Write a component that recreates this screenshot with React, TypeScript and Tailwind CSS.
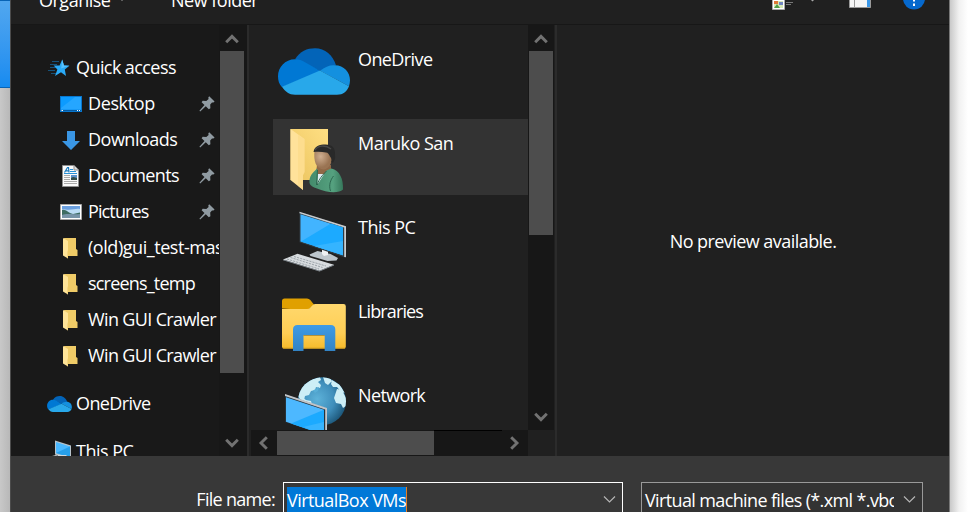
import type { ReactNode } from "react";

type Dir = "up" | "down" | "left" | "right";

const ARROWS: Record<Dir, string> = {
  up: "M7.2 17.2 13 11.4 18.8 17.2",
  down: "M7.2 9.8 13 15.6 18.8 9.8",
  left: "M15.8 7.2 10 13 15.8 18.8",
  right: "M9.2 7.2 15 13 9.2 18.8",
};

function ScrollArrow({ dir }: { dir: Dir }) {
  return (
    <svg className="h-[26px] w-[26px] shrink-0" viewBox="0 0 26 26" fill="none">
      <path d={ARROWS[dir]} stroke="#727272" strokeWidth="2.9" />
    </svg>
  );
}

function VScroll({ thumb }: { thumb: string }) {
  return (
    <div className="flex w-[26px] shrink-0 flex-col items-center justify-between bg-[#171717]">
      <div className="flex flex-col items-center">
        <ScrollArrow dir="up" />
        <div className={`w-6 bg-[#4d4d4d] ${thumb}`} />
      </div>
      <ScrollArrow dir="down" />
    </div>
  );
}

function Pin() {
  return (
    <svg className="h-4 w-4 shrink-0" viewBox="0 0 16 16" fill="#909ba2">
      <path d="M10.2.2 15.6 5.600 14.400 6.500 13 6.400 11.200 8.600 11.400 12.200 9.800 13.300 6.800 10.300 1.200 15.500.4 14.700 5.500 9 2.600 6.200 3.700 4.800 7.300 4.900 9.600 3 9.300 1.400Z" />
    </svg>
  );
}

function StarIcon() {
  return (
    <svg width="22" height="18" viewBox="0 0 22 18">
      <path d="M4 2.500h7M2 5.500h7M0 11.500h7M2 8.500h6M3 14.500h5" stroke="#17527a" strokeWidth="1" />
      <path d="m14.200.6 1.800 6 5.400.2-4.600 3.700 1.200 6.500-5-3.800-6 3.800 2.400-6.400L5.600 6.500l6 .1Z" fill="#2aaaf6" />
      <path d="m14.200.6 1.800 6 5.400.2-8.200 2.600Z" fill="#55c2ff" />
    </svg>
  );
}

function DesktopIcon() {
  return (
    <svg className="ml-px" width="22" height="16" viewBox="0 0 22 16">
      <path d="M0 0h22v16H0z" fill="#0877cf" />
      <path d="M1 1h20v12.600H1z" fill="#0c9bff" />
      <path d="M1 13.600V12L15 1h6v12.600Z" fill="#25a6ff" />
      <path d="M1 14h20v1H1z" fill="#06599e" />
      <path d="M1.500 14h1.500v1H1.500zM17 14h1v1h-1zM19 14h1v1h-1z" fill="#fff" />
    </svg>
  );
}

function DownloadIcon() {
  return (
    <svg className="ml-px" width="18" height="19" viewBox="0 0 18 19">
      <path d="M5 0h8v10h5l-9 9-9-9h5Z" fill="#3a96e4" />
    </svg>
  );
}

function DocumentIcon() {
  return (
    <svg width="17" height="22" viewBox="0 0 17 22">
      <path d="M.5.5H12L16.500 5v16.500H.5Z" fill="#fafafa" stroke="#8f8f8f" />
      <path d="M12 .5V5h4.500" fill="#ddd" stroke="#8f8f8f" />
      <path d="m2.500 7.500 3-5h1l.5 5M4 5.800h3" stroke="#1979bd" fill="none" strokeWidth="1.200" />
      <path d="M8 4.500h3M8 6.500h6M2 8.500h13" stroke="#2a91d6" />
      <path d="M2 10.500h6M2 12.500h6M2 14.500h6M2 16.500h13M2 18.500h13" stroke="#aaa" />
      <path d="M9 10h6v5H9z" fill="#5c92cb" />
      <path d="M9 13c3-2 4 0 6 0v2H9z" fill="#334c48" />
    </svg>
  );
}

function PictureIcon() {
  return (
    <svg className="ml-px" width="22" height="16" viewBox="0 0 22 16">
      <path d="M.5.5h21v15H.5z" fill="#fff" stroke="#a5a5a5" />
      <path d="M2 2h18v12H2z" fill="#bcdcf5" />
      <path d="M2 2h18v3c-5-1-8 2-18 0Z" fill="#6ba0e0" />
      <path d="M2 6c4-1 6 3 11 4l7-1.500v3H2Z" fill="#3d6c62" />
      <path d="M2 11c6-2 10 0 18-1v4H2Z" fill="#7894a8" />
    </svg>
  );
}

function SmallFolder() {
  return (
    <svg width="15" height="21" viewBox="0 0 15 21">
      <path d="M1 0h12v11l1.500 1v6H3Z" fill="#efcb67" />
      <path d="M0 0 5 3v17.500L0 17.500Z" fill="#ffe498" />
      <path d="M5 3v17.500l-1-1V14l1-2Z" fill="#f7d67f" />
    </svg>
  );
}

function Cloud({ className }: { className: string }) {
  return (
    <svg className={className} viewBox="0 0 72 46.500">
      <path d="M17 11C22 3 29 0 37 0c10 0 18 7 21 17L42 22.500Z" fill="#0364b8" />
      <path d="M17 11c4 0 7 1 10 3l16 9L4 39C1 36 0 32 0 28c0-9 7-17 17-17Z" fill="#0078d4" />
      <path d="M42 22.500c5-4 10-6 15-5.500 9 0 15 7 15 15 0 2-.5 4-1 6Z" fill="#1490df" />
      <path d="M42 22.200 71 38c-2 5-6 8.500-12 8.500H17C11 46.500 7 43 4 38.500Z" fill="#28a8ea" />
    </svg>
  );
}

function SmallPC() {
  return (
    <svg className="ml-1" width="20" height="24" viewBox="0 0 20 24">
      <path d="m3 .5 16 5v14l-16-5Z" fill="#b8c4cb" />
      <path d="m4 2 14 4.500v11L4 13Z" fill="#4ab8ff" />
      <path d="m4 13 14-6.500v11Z" fill="#269fea" />
      <path d="M6 15h8l3 3-8 1-4-2Z" fill="#d1d8dc" />
      <path d="m0 16 4-1 9 4-4 2Z" fill="#c7cdd1" />
    </svg>
  );
}

function UserFolder() {
  return (
    <svg width="80" height="76" viewBox="273 119 80 76">
      <defs>
        <linearGradient id="uf" x1="0" y1="1" x2="1" y2="0">
          <stop stopColor="#ebc45f" />
          <stop offset="1" stopColor="#ffdf83" />
        </linearGradient>
        <radialGradient id="face" cx=".35" cy=".4">
          <stop stopColor="#cfae90" />
          <stop offset="1" stopColor="#9a7453" />
        </radialGradient>
        <linearGradient id="robe">
          <stop stopColor="#448b6c" />
          <stop offset=".7" stopColor="#55a17f" />
          <stop offset="1" stopColor="#36775b" />
        </linearGradient>
      </defs>
      <path d="M290.500 129H328v51h-37.500z" fill="url(#uf)" />
      <path d="m290.500 129 14 10v33l-1.500 3v15l-12.500-10Z" fill="#ffe29a" />
      <path d="M304.500 139v33l-1.500 3v15l-5-4v-51Z" fill="#fbd985" opacity=".55" />
      <path d="M317 165h14v9l-7 6-8-7Z" fill="#906847" />
      <path d="M317 174h8l-5 12-4-3Z" fill="#e2edf4" />
      <path d="M309.500 183c-.5-7 3-10 7.500-14.500l1 3-.5 13 9-14 5-2c8 2 12 10 11.500 21-4 4-16 3.500-26-1-4-1-7-3-7.500-5.500Z" fill="url(#robe)" />
      <path d="m317.500 170-1 15m10-14c-6 6-9 11-9 14m13 6c-2-6 0-11 3-15" stroke="#2d6850" fill="none" />
      <path d="M314.500 151c1-4 17-5 18 2 1 8-3 16-9 16.500-8-1-10-9-9-18.500Z" fill="url(#face)" />
      <path d="M313.500 152c1-6 6-7.500 12-7.500 7 0 10 4 9.500 10 .5 3 0 6-2 8h-2c1-3 0-5-1-6-1-2-2-4-4-4-4-1-9-1-12.500-.5Z" fill="#292929" />
      <path d="M315 150c3-5 11-5 16-1" stroke="#484848" strokeWidth="1.500" fill="none" />
    </svg>
  );
}

function PCIcon() {
  return (
    <svg width="80" height="76" viewBox="273 203 80 76">
      <path d="m309.500 254.500 8-3.500 13 3 7.500 4-1.500 2.500-9 .5-10-3-7-2Z" fill="#bcc5cb" />
      <path d="m322 249 6 2v4l-4 1-2-2Z" fill="#eef1f3" />
      <path d="m299.500 212 46.500 14.800V257l-2 .2-44.500-15Z" fill="#303b42" />
      <path d="m299.500 211.800 46.500 14.500v30.900l-1.800-.2v-29.400l-44.700-14.300Z" fill="#c8cccf" />
      <path d="m300.500 214.300 42.500 13.300v27.600l-42.500-13.800Z" fill="#42b4ff" />
      <path d="m301 241.400 30-17.800 12 4v27.600Z" fill="#1caaff" />
      <path d="m314 246 29-5v14.200Z" fill="#35b4ff" />
      <path d="m283 259.500 14.500-5.700 36.500 11-14.500 6Z" fill="#d8dcdf" />
      <path d="m283 259.500 36.500 11.300 14.500-6v.8l-14.500 6-36.500-11.300Z" fill="#8d969d" />
      <path d="m287 259 32 10m-28.500-11.500 32 10M294 256.500l32 9.500" stroke="#8d969c" strokeWidth=".8" strokeDasharray="2.200 1" fill="none" />
    </svg>
  );
}

function LibrariesIcon() {
  return (
    <svg width="80" height="76" viewBox="273 287 80 76">
      <defs>
        <linearGradient id="lib" x1="0" y1="0" x2="0" y2="1">
          <stop stopColor="#ffd86d" />
          <stop offset=".65" stopColor="#ffce55" />
          <stop offset="1" stopColor="#f6bb2a" />
        </linearGradient>
        <linearGradient id="libblue" x1="0" y1="0" x2="0" y2="1">
          <stop stopColor="#3e9be6" />
          <stop offset="1" stopColor="#3283c4" />
        </linearGradient>
      </defs>
      <path d="M282 308.500V301q0-2.500 2.500-2.500H307q2 0 3.300 1.500l4 5-7 5Z" fill="#e0a000" />
      <path d="M282 309h25q2 0 3.300-1.500l2-2Q313.500 304 315 304h28.500q2.300 0 2.300 2.300v40.400q0 2-2.300 2h-59q-2.500 0-2.500-2Z" fill="url(#lib)" />
      <path d="M283 348.300h62" stroke="#b78b20" />
      <path d="M293 351v-21.500q0-4.500 4.500-4.500h33.300q4.500 0 4.500 4.500V351h-10.600v-15.500h-21.200V351Z" fill="url(#libblue)" />
      <path d="M303.500 335.500h21.200" stroke="#b2923a" />
    </svg>
  );
}

function NetworkIcon() {
  return (
    <svg width="80" height="76" viewBox="273 371 80 76">
      <defs>
        <radialGradient id="globe" cx=".4" cy=".45" r=".65">
          <stop stopColor="#5db2d9" />
          <stop offset=".55" stopColor="#3f8ebb" />
          <stop offset="1" stopColor="#174e6f" />
        </radialGradient>
        <clipPath id="globeClip"><circle cx="322" cy="401.300" r="24" /></clipPath>
      </defs>
      <circle cx="322" cy="401.300" r="24" fill="url(#globe)" />
      <g clipPath="url(#globeClip)" fill="#cdeef6">
        <path d="M298 396c1-7 7-14 15-17l7-2 1 3-3 2 3 3-1 3-4-1-1 3-4 1-2 4-4 1-1 4 4 3-2 3-4-4Z" />
        <path d="m302 397 4 3 5 1 1 4-3 3-5-2-4-4ZM323 377l7 1 2 3-4 4-3-2ZM332 380l8 5 5 8-4-1-4-5-4 0-2-3Z" />
        <path d="m337 389 5 1 4 8v8l-3 2-2-4-5-1-2-5Z" />
      </g>
      <path d="M313 390.500 319 387l-1 4-3 2Z" fill="#58aed6" />
      <path d="m285 394.500 42 14V436l-42-14Z" fill="#26323a" />
      <path d="m285 394 42 14v28h-1.800v-26.500L285 396Z" fill="#c2c5c9" />
      <path d="m286 397.200 38 12.500v25l-38-12.900Z" fill="#4db8ff" />
      <path d="m291 423.500 33-13.800v25Z" fill="#1caaff" />
      <path d="m303 427 21-5v12.700Z" fill="#37b4ff" />
    </svg>
  );
}

function NavRow({ icon, label, tracking, pinned, top }: { icon: ReactNode; label: string; tracking: string; pinned?: boolean; top?: boolean }) {
  return (
    <div className={`flex h-9 shrink-0 items-center ${top ? "pl-9" : "pl-[47px]"}`}>
      <div className="flex w-[25px] shrink-0 justify-center">{icon}</div>
      <div className={`min-w-0 flex-1 overflow-hidden pb-0.5 whitespace-nowrap ${top ? "pl-1" : "pl-[5px]"} ${tracking}`}>{label}</div>
      {pinned && <div className="w-5 shrink-0"><Pin /></div>}
    </div>
  );
}

function FileRow({ icon, label, tracking, selected }: { icon: ReactNode; label: string; tracking: string; selected?: boolean }) {
  return (
    <div className={`flex h-[76px] shrink-0 ${selected ? "bg-[#333333]" : ""}`}>
      <div className="w-20 shrink-0">{icon}</div>
      <div className={`pt-3 pl-[5px] whitespace-nowrap ${tracking}`}>{label}</div>
    </div>
  );
}

function ComboArrow() {
  return (
    <svg className="h-8 w-[26px] shrink-0" viewBox="0 0 26 32" fill="none">
      <path d="m8 13.500 5.500 5.500 5.500-5.500" stroke="#b5b5b5" strokeWidth="1.200" />
    </svg>
  );
}

function Toolbar() {
  return (
    <div className="h-[25px] overflow-hidden border-b border-[#171717] bg-[#202020]">
      <div className="-mt-3 flex h-6 items-center pr-6 pl-7">
        <span className="w-[71px] tracking-[-0.5px]">Organise</span>
        <svg className="ml-2 h-2.5 w-2 shrink-0" viewBox="0 0 8 10"><path d="M.5 2h7L4 6Z" fill="#aaa" /></svg>
        <span className="ml-[45px] tracking-[-0.5px]">New folder</span>
        <svg className="ml-auto h-6 w-[155px] shrink-0" viewBox="770 -12 155 24">
          <path d="M772.500-4.500h12v14h-12z" fill="#fff" stroke="#a9a9a9" />
          <path d="M774 1h9v7h-9z" fill="#d7e9b5" />
          <path d="M774 1h4v3h-4z" fill="#df7836" />
          <path d="M779 2h4v3h-4z" fill="#7185bf" />
          <path d="m774 8 3-4 3 4Z" fill="#4f9c45" />
          <path d="M786 2.500h7M786 4.500h5" stroke="#777" />
          <path d="m809-2 3.500 3.500L816-2Z" fill="#aaa" />
          <path d="M849.500-6.500h21v14h-21z" fill="#f5f5f5" stroke="#999" />
          <path d="M854.500-6v13" stroke="#999" />
          <path d="M867-6h3V7h-3z" fill="#3b98e8" />
          <circle cx="914" cy="-1.500" r="11" fill="#0669ce" />
          <path d="M913-1h2v2.500h-2zM913 3.500h2V6h-2z" fill="#fff" />
        </svg>
      </div>
    </div>
  );
}

export default function App() {
  return (
    <div className="flex h-[512px] w-[968px] overflow-hidden bg-white font-['Open_Sans','Noto_Sans',sans-serif] text-[18px] leading-6 text-white">
      <div className="flex w-2.5 shrink-0 flex-col">
        <div className="h-[88px] border-t border-b border-[#0763b5] bg-linear-to-b from-[#51a7ef] to-[#158bf0]" />
        <div className="flex-1 bg-linear-to-r from-[#c8c8c8] to-[#b8b8b8]" />
      </div>
      <div className="flex w-[940px] shrink-0 flex-col border-x border-l-[#4b4b4b] border-r-[#777777]">
        <Toolbar />
        <div className="flex h-[431px] shrink-0">
          <div className="flex w-[234px] shrink-0 bg-[#191919]">
            <div className="flex min-w-0 flex-1 flex-col overflow-hidden pt-[25px]">
              <NavRow top icon={<div className="mr-0.5"><StarIcon /></div>} label="Quick access" tracking="tracking-[-0.58px]" />
              <NavRow pinned icon={<DesktopIcon />} label="Desktop" tracking="tracking-[-0.38px]" />
              <NavRow pinned icon={<DownloadIcon />} label="Downloads" tracking="tracking-[-0.5px]" />
              <NavRow pinned icon={<DocumentIcon />} label="Documents" tracking="tracking-[-0.6px]" />
              <NavRow pinned icon={<PictureIcon />} label="Pictures" tracking="tracking-[-0.88px]" />
              <NavRow icon={<SmallFolder />} label="(old)gui_test-master" tracking="tracking-[-0.45px]" />
              <NavRow icon={<SmallFolder />} label="screens_temp" tracking="tracking-[-0.8px]" />
              <NavRow icon={<SmallFolder />} label="Win GUI Crawler" tracking="tracking-[-0.64px]" />
              <NavRow icon={<SmallFolder />} label="Win GUI Crawler" tracking="tracking-[-0.64px]" />
              <div className="h-3 shrink-0" />
              <NavRow top icon={<Cloud className="h-4 w-[25px]" />} label="OneDrive" tracking="tracking-[-0.6px]" />
              <div className="h-3 shrink-0" />
              <NavRow top icon={<SmallPC />} label="This PC" tracking="tracking-[-0.5px]" />
            </div>
            <VScroll thumb="h-[322px]" />
          </div>
          <div className="w-1.5 shrink-0 border-r-2 border-l-2 border-l-[#171717] border-r-[#202020] bg-[#2b2b2b]" />
          <div className="flex w-[304px] shrink-0 flex-col bg-[#202020]">
            <div className="flex h-[405px]">
              <div className="flex w-[277px] flex-col gap-2 overflow-hidden pt-2.5 pl-[22px]">
                <FileRow icon={<Cloud className="mt-[13px] ml-[5px] h-[47px] w-[72px]" />} label="OneDrive" tracking="tracking-[-0.6px]" />
                <FileRow selected icon={<UserFolder />} label="Maruko San" tracking="tracking-[-0.52px]" />
                <FileRow icon={<PCIcon />} label="This PC" tracking="tracking-[-0.5px]" />
                <FileRow icon={<LibrariesIcon />} label="Libraries" tracking="tracking-[-0.88px]" />
                <FileRow icon={<NetworkIcon />} label="Network" tracking="tracking-[-0.64px]" />
              </div>
              <VScroll thumb="h-[184px]" />
            </div>
            <div className="flex h-[26px] w-[277px] items-center bg-[#171717]">
              <ScrollArrow dir="left" />
              <div className="h-6 w-[157px] bg-[#4d4d4d]" />
              <div className="h-[26px] w-[68px] border-t border-black" />
              <ScrollArrow dir="right" />
            </div>
          </div>
          <div className="w-0.5 shrink-0 bg-[#2b2b2b]" />
          <div className="flex flex-1 items-center justify-center bg-[#202020] tracking-[-0.55px]">No preview available.</div>
        </div>
        <div className="flex h-14 shrink-0 overflow-hidden bg-[#383838] pt-[26px]">
          <div className="w-[264px] pt-[5px] text-right tracking-[-0.7px]">File name:</div>
          <div className="ml-2 flex h-9 w-[340px] justify-between border border-white bg-[#383838] pt-1 pl-[3px]">
            <div className="h-[30px] border-r border-[#e67e22] bg-[#0078d7] pt-px tracking-[-0.55px]">VirtualBox VMs</div>
            <div className="-mt-1"><ComboArrow /></div>
          </div>
          <div className="ml-[18px] flex h-9 w-[282px] border border-[#999999] bg-[#333333]">
            <div className="w-[252px] overflow-hidden pt-[5px] pl-[3px] tracking-[-0.63px] whitespace-nowrap">Virtual machine files (*.xml *.vbox)</div>
            <div className="ml-0.5"><ComboArrow /></div>
          </div>
        </div>
      </div>
      <div className="flex-1 bg-linear-to-r from-[#c9c9c9] via-[#f1f1f1] to-white" />
    </div>
  );
}
